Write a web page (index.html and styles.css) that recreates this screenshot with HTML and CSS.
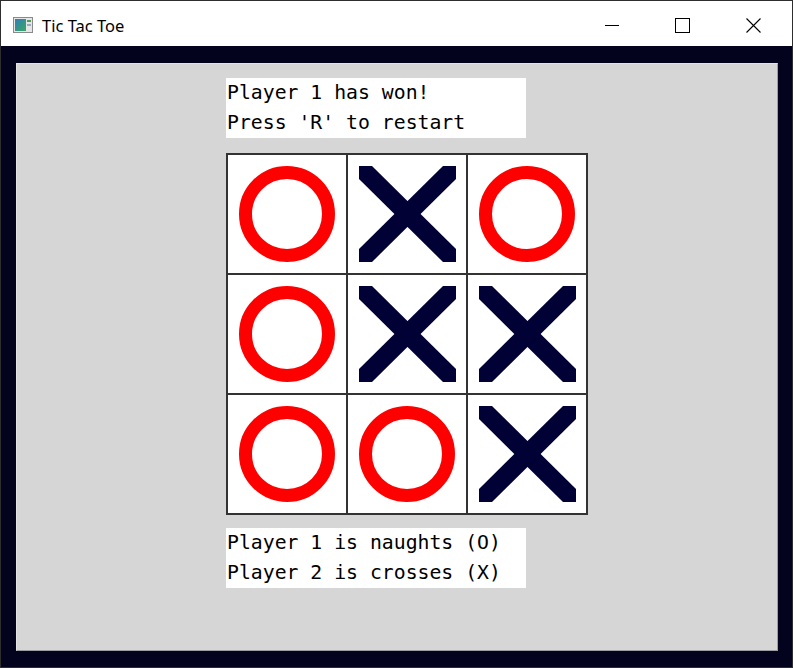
FILE: index.html
```html
<!DOCTYPE html>
<html>
<head>
<meta charset="utf-8">
<link rel="stylesheet" href="styles.css">
</head>
<body>
<div class="window">
  <div class="titlebar">
    <svg class="appicon" width="20" height="16" viewBox="0 0 20 16">
      <rect x="0.5" y="0.5" width="19" height="15" fill="#e6e6e6" stroke="#8a8a8a"/>
      <defs>
        <linearGradient id="g" x1="0" y1="0" x2="1" y2="1">
          <stop offset="0" stop-color="#2f7fb8"/>
          <stop offset="1" stop-color="#3aa862"/>
        </linearGradient>
      </defs>
      <rect x="2" y="2" width="11" height="12" fill="url(#g)"/>
      <rect x="14" y="3" width="4" height="2" fill="#4e9a5f"/>
      <rect x="14" y="7" width="4" height="2" fill="#9ab"/>
    </svg>
    <span class="title">Tic Tac Toe</span>
    <div class="controls">
      <div class="ctl"><svg width="14" height="14" viewBox="0 0 14 14"><line x1="0" y1="7.5" x2="14" y2="7.5" stroke="#000" stroke-width="1"/></svg></div>
      <div class="ctl"><svg width="15" height="15" viewBox="0 0 15 15"><rect x="0.5" y="0.5" width="14" height="14" fill="none" stroke="#000" stroke-width="1"/></svg></div>
      <div class="ctl"><svg width="15" height="15" viewBox="0 0 15 15"><path d="M0.5 0.5 L14.5 14.5 M14.5 0.5 L0.5 14.5" stroke="#000" stroke-width="1.1" fill="none"/></svg></div>
    </div>
  </div>
  <div class="frame">
    <div class="panel">
      <div class="msg">
        <div>Player 1 has won!</div>
        <div>Press 'R' to restart</div>
      </div>
      <div class="board">
        <div class="cell"><svg class="o" viewBox="0 0 96 96"><circle cx="48" cy="48" r="41.5" fill="none" stroke="#ff0000" stroke-width="13"/></svg></div>
        <div class="cell"><svg class="x" viewBox="0 0 97 96"><polygon points="0,0 13,0 97,83 97,96 84,96 0,13"/><polygon points="97,0 84,0 0,83 0,96 13,96 97,13"/></svg></div>
        <div class="cell"><svg class="o" viewBox="0 0 96 96"><circle cx="48" cy="48" r="41.5" fill="none" stroke="#ff0000" stroke-width="13"/></svg></div>
        <div class="cell"><svg class="o" viewBox="0 0 96 96"><circle cx="48" cy="48" r="41.5" fill="none" stroke="#ff0000" stroke-width="13"/></svg></div>
        <div class="cell"><svg class="x" viewBox="0 0 97 96"><polygon points="0,0 13,0 97,83 97,96 84,96 0,13"/><polygon points="97,0 84,0 0,83 0,96 13,96 97,13"/></svg></div>
        <div class="cell"><svg class="x" viewBox="0 0 97 96"><polygon points="0,0 13,0 97,83 97,96 84,96 0,13"/><polygon points="97,0 84,0 0,83 0,96 13,96 97,13"/></svg></div>
        <div class="cell"><svg class="o" viewBox="0 0 96 96"><circle cx="48" cy="48" r="41.5" fill="none" stroke="#ff0000" stroke-width="13"/></svg></div>
        <div class="cell"><svg class="o" viewBox="0 0 96 96"><circle cx="48" cy="48" r="41.5" fill="none" stroke="#ff0000" stroke-width="13"/></svg></div>
        <div class="cell"><svg class="x" viewBox="0 0 97 96"><polygon points="0,0 13,0 97,83 97,96 84,96 0,13"/><polygon points="97,0 84,0 0,83 0,96 13,96 97,13"/></svg></div>
      </div>
      <div class="msg bottom">
        <div>Player 1 is naughts (O)</div>
        <div>Player 2 is crosses (X)</div>
      </div>
    </div>
  </div>
</div>
</body>
</html>
```

FILE: styles.css
```css
html, body {
  margin: 0;
  padding: 0;
  width: 793px;
  height: 668px;
  overflow: hidden;
  background: #ffffff;
}

.window {
  box-sizing: border-box;
  width: 793px;
  height: 668px;
  border: 1px solid #2e2e2e;
  display: flex;
  flex-direction: column;
}

.titlebar {
  height: 45px;
  box-sizing: border-box;
  flex: none;
  background: #ffffff;
  display: flex;
  align-items: center;
  padding-left: 12px;
  padding-top: 3px;
}

.appicon {
  flex: none;
}

.title {
  font-family: "Noto Sans", "Open Sans", sans-serif;
  font-size: 16.5px;
  color: #000;
  margin-left: 9px;
  margin-top: 1px;
}

.controls {
  margin-left: auto;
  display: flex;
  height: 100%;
}

.ctl {
  width: 71px;
  display: flex;
  align-items: center;
  justify-content: center;
}

.ctl:first-child {
  width: 46px;
  margin-right: 12px;
}

.ctl:last-child {
  width: 71px;
  margin-right: 3px;
}

.frame {
  flex: 1;
  background: #03031d;
  padding: 17px 14px 16px 15px;
  display: flex;
}

.panel {
  flex: 1;
  background: #d6d6d6;
  border-top: 1px solid #e4e4e4;
  border-left: 1px solid #e4e4e4;
  border-right: 1px solid #9c9ca4;
  border-bottom: 1px solid #9c9ca4;
  padding: 14px 0 0 209px;
  display: flex;
  flex-direction: column;
  align-items: flex-start;
}

.msg {
  width: 300px;
  height: 60px;
  background: #ffffff;
  font-family: "DejaVu Sans Mono", monospace;
  font-size: 19.8px;
  line-height: 30px;
  color: #000;
  padding-left: 1px;
  box-sizing: border-box;
}

.board {
  margin-top: 15px;
  display: grid;
  grid-template-columns: repeat(3, 118px);
  grid-template-rows: repeat(3, 118px);
  gap: 2px;
  padding: 2px;
  background: #333333;
}

.cell {
  background: #ffffff;
  display: flex;
  align-items: center;
  justify-content: center;
}

.o {
  width: 96px;
  height: 96px;
}

.x {
  width: 97px;
  height: 96px;
  fill: #020135;
}

.msg.bottom {
  margin-top: 13px;
}
```
